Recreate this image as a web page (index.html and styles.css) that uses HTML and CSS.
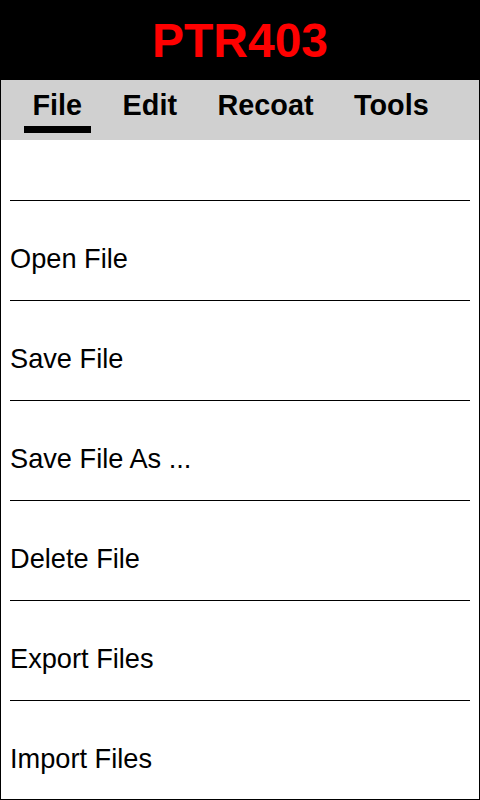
FILE: index.html
```html
<!DOCTYPE html>
<html>
<head>
<meta charset="utf-8">
<link rel="stylesheet" href="styles.css">
</head>
<body>
<header class="app-header"><h1 class="app-title">PTR403</h1></header>
<nav class="tabs">
  <div class="tab active">File</div>
  <div class="tab">Edit</div>
  <div class="tab">Recoat</div>
  <div class="tab">Tools</div>
</nav>
<ul class="menu">
  <li class="menu-item">Open File</li>
  <li class="menu-item">Save File</li>
  <li class="menu-item">Save File As ...</li>
  <li class="menu-item">Delete File</li>
  <li class="menu-item">Export Files</li>
  <li class="menu-item">Import Files</li>
</ul>
</body>
</html>
```
FILE: styles.css
```css
html, body { margin: 0; padding: 0; }
body {
  box-sizing: border-box;
  width: 480px;
  height: 800px;
  border: 1px solid #000;
  overflow: hidden;
  font-family: "Liberation Sans", Arial, sans-serif;
  background: #fff;
  color: #000;
}
.app-header {
  box-sizing: border-box;
  height: 79px;
  background: #000;
  padding-top: 16px;
}
.app-title {
  margin: 0;
  text-align: center;
  color: #ff0000;
  font-size: 48px;
  line-height: 48px;
  font-weight: bold;
}
.tabs {
  box-sizing: border-box;
  height: 60px;
  background: #d0d0d0;
  display: flex;
  gap: 22.5px;
  padding: 11px 0 0 22.5px;
}
.tab {
  padding: 0 9px;
  font-size: 28.8px;
  line-height: 28px;
  font-weight: bold;
  display: flex;
  flex-direction: column;
}
.tab::after {
  content: "";
  display: block;
  height: 7px;
  margin-top: 7px;
  margin-left: -9px;
  margin-right: -9px;
}
.tab.active::after { background: #000; }
.menu {
  list-style: none;
  margin: 0;
  padding: 60px 0 0 0;
}
.menu-item {
  box-sizing: border-box;
  height: 100px;
  margin: 0 9px;
  border-top: 1px solid #000;
  padding-top: 42px;
  font-size: 27.2px;
  line-height: 32px;
}
```
